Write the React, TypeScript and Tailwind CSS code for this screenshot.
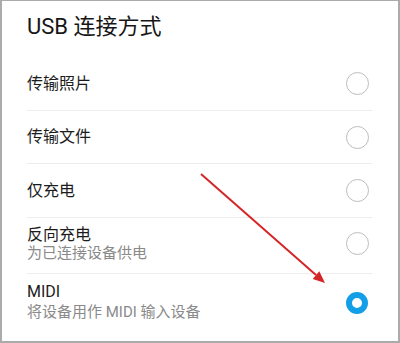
const options = [
    { title: '传输照片', h: 'h-[54px]', selected: false },
    { title: '传输文件', h: 'h-[53px]', selected: false },
    { title: '仅充电', h: 'h-[54px]', selected: false },
];

const Radio = ({ selected }: { selected: boolean }) =>
    selected ? (
        <span className="block w-[22px] h-[22px] rounded-full border-[6.5px] border-[#139fe7] bg-white" />
    ) : (
        <span className="block w-[23px] h-[23px] rounded-full border-[1.5px] border-[#bdbdbd] bg-white" />
    );

const App = () => {
    return (
        <div
            className="relative w-[400px] h-[343px] bg-white border-x-2 border-b-2 border-t border-[#ababab] overflow-hidden"
            style={{ fontFamily: 'Roboto, "Noto Sans CJK SC", sans-serif' }}
        >
            <h1 className="pl-[25px] pt-[12px] pb-[16px] text-[22px] leading-[28px] text-[#161616] font-normal">
                USB 连接方式
            </h1>

            <div className="ml-[25px] mr-[26px]">
                {options.map((o) => (
                    <div
                        key={o.title}
                        className={`${o.h} flex items-center justify-between border-b border-[#ededed] pr-[3px]`}
                    >
                        <span className="text-[16px] text-[#1c1c1c]">{o.title}</span>
                        <Radio selected={o.selected} />
                    </div>
                ))}

                {/* reverse charging */}
                <div className="h-[56px] flex items-center justify-between border-b border-[#ededed] pr-[3px]">
                    <div className="mb-[4px]">
                        <p className="text-[16px] leading-[18px] text-[#1c1c1c]">反向充电</p>
                        <p className="text-[15px] leading-[18px] text-[#8a8a8a]">为已连接设备供电</p>
                    </div>
                    <div className="mb-[5px]">
                        <Radio selected={false} />
                    </div>
                </div>

                <div className="h-[57px] flex items-center justify-between pr-[3px]">
                    <div>
                        <p className="text-[16px] leading-[20px] text-[#1c1c1c]">MIDI</p>
                        <p className="text-[15px] leading-[21px] text-[#8a8a8a]">将设备用作 MIDI 输入设备</p>
                    </div>
                    <div className="mr-[1px]">
                        <Radio selected />
                    </div>
                </div>
            </div>

            {/* red annotation arrow */}
            <svg className="absolute left-[-2px] top-[-1px] pointer-events-none" width="400" height="343">
                <line x1="201" y1="174" x2="316" y2="275" stroke="#d42626" strokeWidth="2" />
                <polygon points="325,283 312.7,278.9 319.3,271.3" fill="#d42626" />
            </svg>
        </div>
    );
};

export default App;
